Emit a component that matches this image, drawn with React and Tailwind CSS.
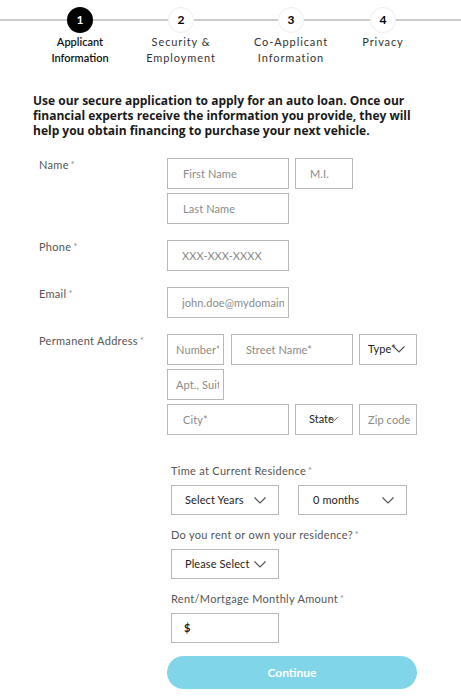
import { useState } from "react";

const font = "font-['Lato','Liberation_Sans',sans-serif]";

function Chevron({ className = "" }) {
  return (
    <svg width="12" height="7" viewBox="0 0 12 7" className={className}>
      <polyline points="0.5,0.5 6,6 11.5,0.5" fill="none" stroke="#555" strokeWidth="1.2" />
    </svg>
  );
}

function Field({ placeholder, className = "", pad = "pl-[15px]" }) {
  return (
    <input
      placeholder={placeholder}
      className={`h-[31px] border border-[#b8b8b8] bg-white ${pad} pr-[4px] text-[11px] tracking-[0.1px] text-[#222] placeholder:text-[#8a8a8a] outline-none ${className}`}
    />
  );
}

function Select({ label, className = "", pl = "pl-[13px]" }) {
  return (
    <button
      className={`flex h-[30px] items-center justify-between whitespace-nowrap border border-[#b8b8b8] bg-white ${pl} pr-[12px] text-[11px] tracking-[0.1px] text-[#222] ${className}`}
    >
      <span>{label}</span>
      <Chevron />
    </button>
  );
}

function Label({ children }) {
  return (
    <div className="whitespace-nowrap text-[11px] leading-[14px] tracking-[0.3px] text-[#555]">
      {children}
      <span className="relative -top-[1px] ml-[2px] text-[9px] text-[#888]">*</span>
    </div>
  );
}

const steps = [
  { n: 1, label: ["Applicant", "Information"], w: "w-[100px]", active: true },
  { n: 2, label: ["Security &", "Employment"], w: "w-[102px]" },
  { n: 3, label: ["Co-Applicant", "Information"], w: "w-[118px]" },
  { n: 4, label: ["Privacy"], w: "w-[66px]" },
];

export default function App() {
  const [amount, setAmount] = useState("");

  return (
    <div className={`w-[461px] min-h-[700px] bg-white ${font}`}>
      {/* Stepper */}
      <div className="relative pt-[7px]">
        <div className="absolute left-0 right-0 top-[19px] h-[2px] bg-[#cccccc]"></div>
        <div className="relative flex pl-[30px]">
          {steps.map((s) => (
            <div key={s.n} className={`flex flex-col items-center ${s.w}`}>
              <div
                className={`flex h-[26px] w-[26px] items-center justify-center rounded-full text-[12px] font-bold ${
                  s.active ? "bg-black text-white" : "border border-[#eeeeee] bg-white text-black"
                }`}
              >
                {s.n}
              </div>
              <div
                className={`mt-[1px] text-center text-[11px] leading-[16px] ${
                  s.active ? "font-semibold text-[#111]" : "tracking-[0.9px] text-[#333]"
                }`}
              >
                {s.label.map((l) => (
                  <div key={l}>{l}</div>
                ))}
              </div>
            </div>
          ))}
        </div>
      </div>

      {/* Intro */}
      <p className="mt-[27px] w-[425px] pl-[33px] font-['Open_Sans','Liberation_Sans',sans-serif] text-[12px] font-bold leading-[15px] text-[#1a1a1a]">
        Use our secure application to apply for an auto loan. Once our financial experts receive the
        information you provide, they will help you obtain financing to purchase your next vehicle.
      </p>

      {/* Form */}
      <div className="mt-[20px] flex flex-col gap-[16px] pl-[39px]">
        <div className="flex">
          <div className="w-[128px]">
            <Label>Name</Label>
          </div>
          <div className="flex flex-col gap-[4px]">
            <div className="flex gap-[6px]">
              <Field placeholder="First Name" className="w-[122px]" />
              <Field placeholder="M.I." className="w-[58px]" pad="pl-[14px]" />
            </div>
            <Field placeholder="Last Name" className="w-[122px]" />
          </div>
        </div>

        <div className="flex">
          <div className="w-[128px]">
            <Label>Phone</Label>
          </div>
          <Field placeholder="XXX-XXX-XXXX" className="w-[122px]" pad="pl-[14px]" />
        </div>

        <div className="flex">
          <div className="w-[128px]">
            <Label>Email</Label>
          </div>
          <Field placeholder="john.doe@mydomain.com" className="w-[122px]" pad="pl-[14px]" />
        </div>

        <div className="flex">
          <div className="w-[128px]">
            <Label>Permanent Address</Label>
          </div>
          <div className="flex flex-col gap-[4px]">
            <div className="flex">
              <Field placeholder="Number*" className="w-[57px]" pad="pl-[8px]" />
              <Field placeholder="Street Name*" className="ml-[7px] w-[122px]" pad="pl-[14px]" />
              <button className="ml-[6px] flex h-[31px] w-[58px] items-center whitespace-nowrap border border-[#b8b8b8] bg-white pl-[8px] text-[11px] text-[#222]">
                <span>Type*</span>
                <Chevron className="-ml-[3px]" />
              </button>
            </div>
            <Field placeholder="Apt., Suite" className="w-[57px]" pad="pl-[8px]" />
            <div className="flex gap-[6px]">
              <Field placeholder="City*" className="w-[122px]" pad="pl-[15px]" />
              <button className="flex h-[31px] w-[58px] items-center whitespace-nowrap border border-[#b8b8b8] bg-white pl-[13px] text-[11px] text-[#222]">
                <span>State</span>
                <Chevron className="-ml-[5px] w-[9px]" />
              </button>
              <Field placeholder="Zip code" className="w-[58px]" pad="pl-[8px]" />
            </div>
          </div>
        </div>
      </div>

      {/* Residence */}
      <div className="mt-[29px] flex flex-col pl-[171px]">
        <Label>Time at Current Residence</Label>
        <div className="mt-[6px] flex gap-[19px]">
          <Select label="Select Years" className="w-[108px]" />
          <Select label="0 months" className="w-[109px]" pl="pl-[14px]" />
        </div>

        <div className="mt-[13px]">
          <Label>Do you rent or own your residence?</Label>
        </div>
        <div className="mt-[6px] flex">
          <Select label="Please Select" className="w-[108px]" />
        </div>

        <div className="mt-[13px]">
          <Label>Rent/Mortgage Monthly Amount</Label>
        </div>
        <div className="mt-[6px] flex h-[30px] w-[108px] items-center border border-[#b8b8b8] bg-white pl-[12px]">
          <span className="text-[11px] font-bold text-[#222]">$</span>
          <input
            value={amount}
            onChange={(e) => setAmount(e.target.value)}
            className="ml-[4px] w-[70px] text-[11px] outline-none"
          />
        </div>
      </div>

      <div className="mt-[13px] pl-[167px]">
        <button className="h-[33px] w-[250px] rounded-full bg-[#80d5e8] text-[12px] font-bold text-white">
          Continue
        </button>
      </div>
    </div>
  );
}
